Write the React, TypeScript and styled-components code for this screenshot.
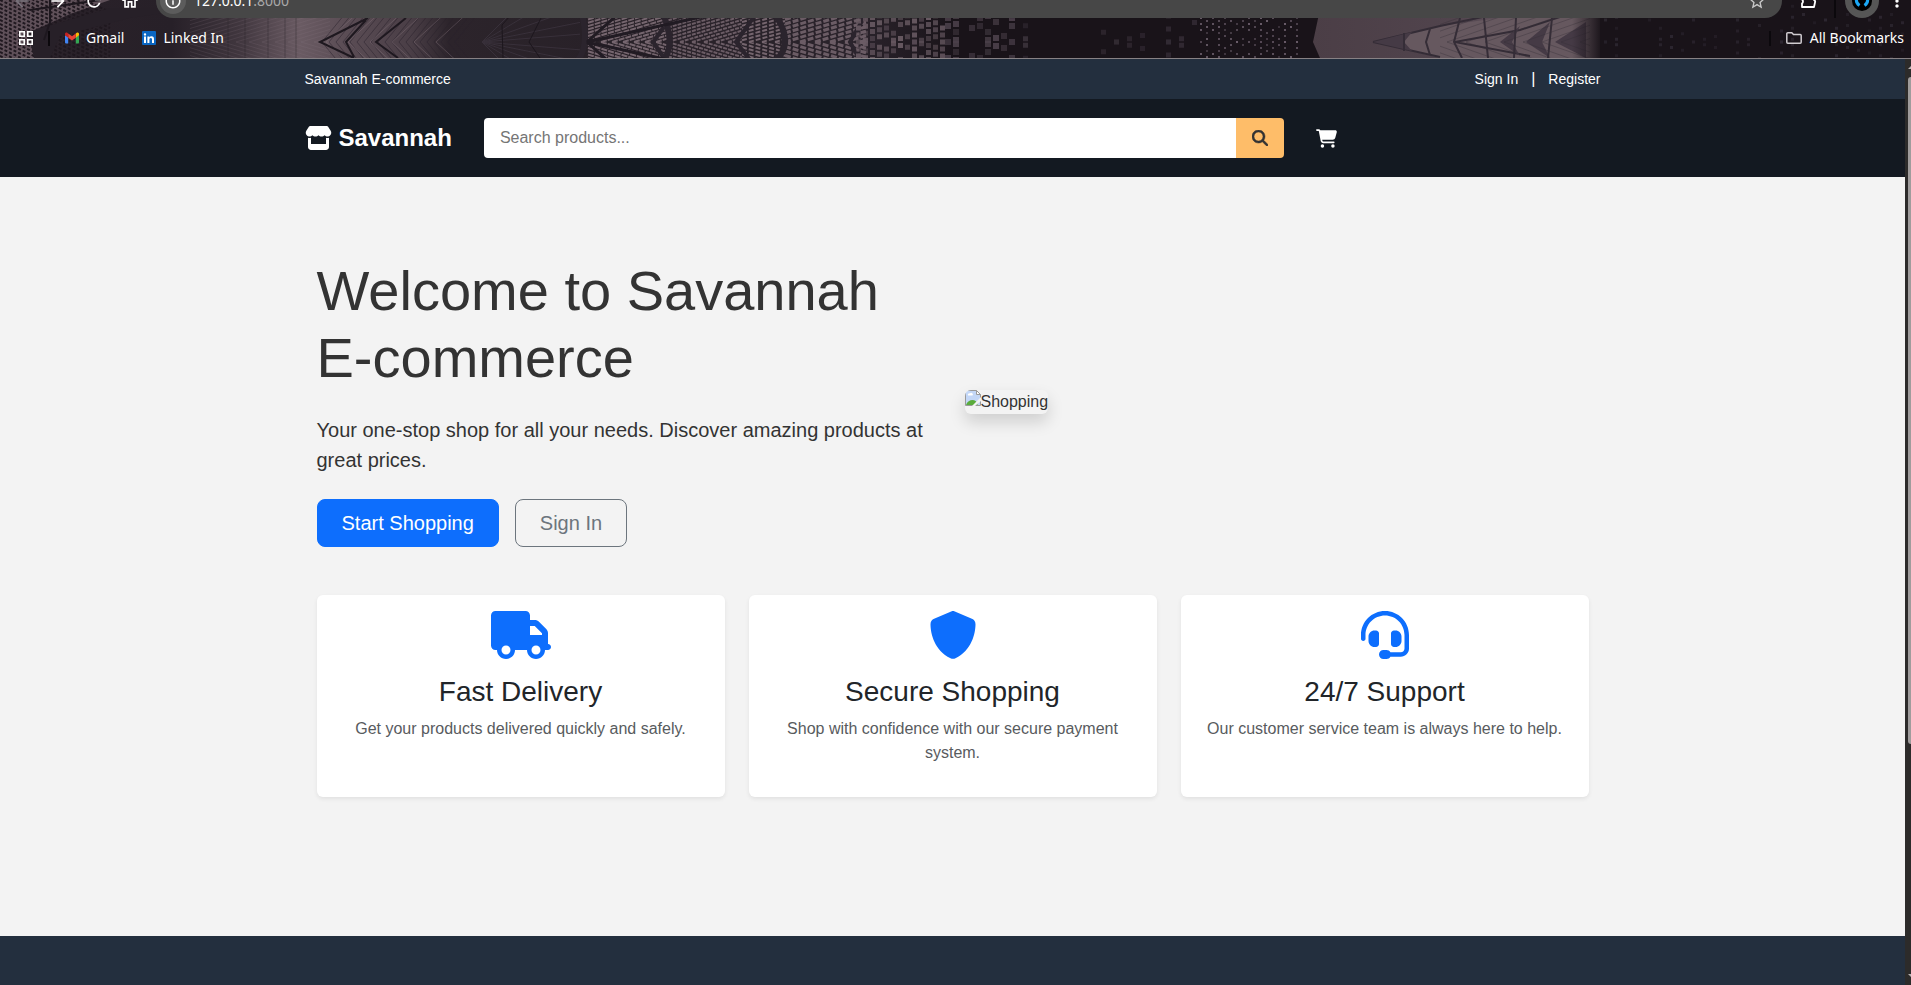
import React from "react";
import styled, { createGlobalStyle, css } from "styled-components";
import {
  FaStore,
  FaMagnifyingGlass,
  FaCartShopping,
  FaTruck,
  FaShield,
  FaHeadset,
} from "react-icons/fa6";
import {
  MdArrowBack,
  MdArrowForward,
  MdRefresh,
  MdOutlineHome,
  MdInfoOutline,
  MdStarBorder,
  MdMoreVert,
} from "react-icons/md";

const GlobalStyle = createGlobalStyle`
  *, *::before, *::after { box-sizing: border-box; }
  body {
    margin: 0;
    background: #232f3e;
    color: #333;
    font: 16px/24px "Liberation Sans", Arial, sans-serif;
  }
  h1, h2, p { margin: 0; font-weight: 400; }
  a { color: inherit; text-decoration: none; }
  svg { display: block; flex: none; }
`;

const Window = styled.div`
  display: flex;
  flex-direction: column;
  min-height: 100vh;
`;

/* ---------- browser chrome ---------- */

const Chrome = styled.header`
  position: relative;
  isolation: isolate;
  overflow: hidden;
  border-bottom: 1px solid #878184;
  background: #1a141b;
  color: #fff;
  font: 14px/20px "Noto Sans", "Open Sans", sans-serif;
`;

const Wallpaper = styled.svg`
  position: absolute;
  top: 0;
  left: 0;
  z-index: -1;
  width: 100%;
  height: 100%;
`;

const Toolbar = styled.div`
  display: flex;
  align-items: flex-end;
  height: 18px;
  padding: 0 0 0 4px;
  overflow: hidden;
`;

const ToolButton = styled.button<{ $dim?: boolean }>`
  display: flex;
  flex: none;
  align-items: center;
  justify-content: center;
  width: 36px;
  height: 34px;
  padding: 0;
  border: 0;
  background: none;
  color: ${(p) => (p.$dim ? "#77717a" : "#fff")};
  font-size: 20px;
`;

const MenuButton = styled(ToolButton)`
  width: 28px;
`;

const AddressBar = styled.div`
  display: flex;
  flex: 1;
  align-items: center;
  gap: 8px;
  height: 34px;
  margin: 0 8px;
  padding: 0 12px 0 4px;
  border-radius: 17px;
  background: #474747;
`;

const SiteInfo = styled.button`
  display: flex;
  align-items: center;
  justify-content: center;
  width: 26px;
  height: 26px;
  padding: 0;
  border: 0;
  border-radius: 13px;
  background: #5c5c5c;
  color: #fff;
  font-size: 18px;
`;

const Address = styled.div`
  flex: 1;
  color: #a9a9a9;
  span { color: #fff; }
`;

const StarButton = styled(ToolButton)`
  width: 26px;
  color: #c9c9c9;
`;

const ToolDivider = styled.span`
  width: 2px;
  height: 26px;
  margin: 0 9px 0 8px;
  background: #0b080c;
`;

const Avatar = styled.button`
  display: flex;
  flex: none;
  align-items: center;
  justify-content: center;
  width: 34px;
  height: 34px;
  margin-right: 4px;
  padding: 0;
  border: 0;
  border-radius: 17px;
  background: #565656;
`;

const Bookmarks = styled.nav`
  display: flex;
  align-items: center;
  height: 40px;
  padding: 0 7px 0 19px;
`;

const BookmarkDivider = styled.span`
  width: 2px;
  height: 15px;
  margin: 0 15px;
  background: #0b080c;
`;

const Bookmark = styled.a`
  display: flex;
  align-items: center;
  gap: 7px;
  margin-right: 18px;
  &:last-child { gap: 8px; margin-right: 0; }
`;

const Spacer = styled.span`
  flex: 1;
`;

/* ---------- page ---------- */

const Viewport = styled.div`
  display: flex;
  flex: 1;
`;

const Page = styled.div`
  display: flex;
  flex: 1;
  flex-direction: column;
  min-width: 0;
`;

const Container = styled.div`
  width: 100%;
  max-width: 1320px;
  margin: 0 auto;
  padding: 0 12px;
`;

const TopBar = styled.div`
  background: #232f3e;
  color: #fff;
  font-size: 14px;
`;

const TopBarRow = styled(Container)`
  display: flex;
  align-items: center;
  justify-content: space-between;
  height: 40px;
`;

const AccountLinks = styled.nav`
  display: flex;
  align-items: center;
  gap: 13px;
  span { font-size: 16px; }
`;

const SiteHeader = styled.div`
  background: #131921;
  color: #fff;
`;

const SiteHeaderRow = styled(Container)`
  display: flex;
  align-items: center;
  gap: 32px;
  height: 78px;
`;

const Brand = styled.a`
  display: flex;
  align-items: center;
  gap: 7px;
  font-size: 24px;
  font-weight: 700;
  line-height: 36px;
  svg { width: 27px; height: 24px; }
`;

const SearchForm = styled.form`
  display: flex;
  flex: 1;
  max-width: 800px;
  height: 40px;
`;

const SearchInput = styled.input`
  flex: 1;
  min-width: 0;
  padding: 0 16px;
  border: 0;
  border-radius: 4px 0 0 4px;
  background: #fff;
  color: #333;
  font: inherit;
  &::placeholder { color: #757575; }
`;

const SearchButton = styled.button`
  display: flex;
  align-items: center;
  justify-content: center;
  width: 48px;
  border: 0;
  border-radius: 0 4px 4px 0;
  background: #febd69;
  color: #333;
  font-size: 16px;
  svg { stroke: currentColor; stroke-width: 16; }
`;

const Main = styled.main`
  padding: 80px 0 139px;
  background: #f3f3f3;
`;

const Content = styled(Container)`
  display: flex;
  flex-direction: column;
  gap: 48px;
  padding: 0 24px;
`;

const Hero = styled.section`
  display: grid;
  grid-template-columns: 1fr 1fr;
  align-items: center;
  gap: 24px;
`;

const HeroText = styled.div`
  display: flex;
  flex-direction: column;
  gap: 24px;
`;

const HeroTitle = styled.h1`
  font-size: 56px;
  line-height: 67px;
`;

const Lead = styled.p`
  font-size: 20px;
  line-height: 30px;
`;

const Actions = styled.div`
  display: flex;
  gap: 16px;
`;

const ActionButton = styled.button<{ $primary?: boolean }>`
  padding: 8px 24px;
  border: 1px solid #6c757d;
  border-radius: 8px;
  background: transparent;
  color: #6c757d;
  font: 20px/30px "Liberation Sans", Arial, sans-serif;
  ${(p) =>
    p.$primary &&
    css`
      border-color: #0d6efd;
      background: #0d6efd;
      color: #fff;
    `}
`;

const MissingImage = styled.div`
  display: flex;
  justify-self: start;
  height: 24px;
  overflow: hidden;
  border-radius: 6px;
  box-shadow: 0 8px 16px rgba(0, 0, 0, 0.15);
`;

const Features = styled.section`
  display: grid;
  grid-template-columns: repeat(3, 1fr);
  gap: 24px;
`;

const FeatureCard = styled.article`
  display: flex;
  flex-direction: column;
  align-items: center;
  padding: 16px 16px 32px;
  border-radius: 6px;
  background: #fff;
  box-shadow: 0 2px 4px rgba(0, 0, 0, 0.075);
  text-align: center;
  > svg { width: 60px; height: 48px; color: #0d6efd; }
`;

const FeatureTitle = styled.h2`
  margin: 16px 0 8px;
  color: #212529;
  font-size: 28px;
  line-height: 34px;
`;

const FeatureText = styled.p`
  color: #585b5e;
`;

const Footer = styled.footer`
  flex: 1;
  background: #232f3e;
`;

const Scrollbar = styled.div`
  display: flex;
  flex: none;
  flex-direction: column;
  width: 6px;
  padding: 7px 0 8px 3px;
  background: #2c2b2a;
`;

const ScrollTrack = styled.div`
  flex: 1;
  padding: 8px 0;
`;

const ScrollThumb = styled.div`
  height: 75%;
  border-radius: 4px 0 0 4px;
  background: #9f9c9c;
`;

/* ---------- wallpaper drawing ---------- */

const AXIS = 42;

/* Repeatable pseudo-random value in 0..1 for a pair of indices. */
const noise = (a: number, b: number) => {
  const v = Math.sin(a * 127.1 + b * 311.7) * 43758.5453;
  return v - Math.floor(v);
};

const mirrored = (draw: (s: number) => string) => draw(1) + draw(-1);

const raysFrom = (x0: number, x1: number, slopes: number[]) =>
  slopes
    .map((k) =>
      mirrored((s) => `M${x0} ${AXIS}L${x1} ${AXIS + s * k * (x1 - x0)}`)
    )
    .join("");

const chevrons = (from: number, to: number, step: number, lean: number) => {
  let d = "";
  for (let x = from; x < to; x += step)
    d += `M${x + lean} ${AXIS - 44}L${x} ${AXIS}L${x + lean} ${AXIS + 44}`;
  return d;
};

/* Parallel slanted lines that meet their mirror image on the axis. */
const fan = (from: number, to: number, gap: number, slope: number) => {
  let d = "";
  for (let x = from - 240; x < to; x += gap) {
    const start = Math.max(from, x);
    d += mirrored(
      (s) =>
        `M${start} ${AXIS + s * slope * (start - x)}L${to} ${
          AXIS + s * slope * (to - x)
        }`
    );
  }
  return d;
};

const Blocks = ({
  from,
  to,
  step,
  size,
  color,
  density,
  spread = 0.25,
}: {
  from: number;
  to: number;
  step: number;
  size: number;
  color: string;
  density: number;
  spread?: number;
}) => {
  const out: React.ReactElement[] = [];
  for (let i = 0; from + i * step < to; i++) {
    const rise = (i * step * spread) % step;
    for (let j = 0; j * step < 46; j++) {
      if (noise(i, j) > density) continue;
      const x = from + i * step;
      [1, -1].forEach((s) =>
        out.push(
          <rect
            key={`${i}-${j}-${s}`}
            x={x}
            y={AXIS + s * (j * step + rise) - size / 2}
            width={size}
            height={size}
            fill={color}
            opacity={0.4 + 0.6 * noise(j, i)}
          />
        )
      );
    }
  }
  return <>{out}</>;
};

const ChromeWallpaper = () => (
  <Wallpaper viewBox="0 0 1911 58" preserveAspectRatio="none" aria-hidden="true">
    <defs>
      <linearGradient id="base" gradientUnits="userSpaceOnUse" x1="0" x2="1911" y1="0" y2="0">
        <stop offset="0" stopColor="#2b222a" />
        <stop offset="0.09" stopColor="#272028" />
        <stop offset="0.125" stopColor="#40363e" />
        <stop offset="0.157" stopColor="#6a5b63" />
        <stop offset="0.18" stopColor="#5b4d55" />
        <stop offset="0.215" stopColor="#4a3e46" />
        <stop offset="0.235" stopColor="#2c242b" />
        <stop offset="0.31" stopColor="#282128" />
        <stop offset="0.45" stopColor="#2a232b" />
        <stop offset="0.5" stopColor="#191319" />
        <stop offset="1" stopColor="#191319" />
      </linearGradient>
      <linearGradient id="wingBase" x1="0" x2="1" y1="0" y2="0">
        <stop offset="0" stopColor="#4b3e46" />
        <stop offset="0.5" stopColor="#51444d" />
        <stop offset="0.75" stopColor="#675963" />
        <stop offset="1" stopColor="#5a4d56" />
      </linearGradient>
      <linearGradient id="wingFade" x1="0" x2="1" y1="0" y2="0">
        <stop offset="0" stopColor="#191319" stopOpacity="0" />
        <stop offset="1" stopColor="#191319" />
      </linearGradient>
      <clipPath id="wing">
        <path d="M1322 0L1313 42L1320 58H1600V0Z" />
      </clipPath>
    </defs>
    <rect width="1911" height="58" fill="url(#base)" />

    {/* screen mesh in the corner */}
    <path d="M0 0H110L70 14L30 32L44 58H0Z" fill="#5f5059" />
    <path
      d={Array.from({ length: 26 }, (_, i) => `M0 ${i * 4 - 40}L110 ${i * 4 + 12}`).join("")}
      stroke="#1f181f"
      strokeWidth="2"
      strokeDasharray="3 2"
      fill="none"
    />
    <path d="M28 32L110 8H200L130 18L60 36L50 58H34Z" fill="#272028" />
    <path d="M50 0V22L44 40M30 10L100 0" stroke="#1d171e" strokeWidth="2" fill="none" />

    {/* glassy chevrons */}
    <path d={fan(190, 330, 13, 0.3)} stroke="#8a7b84" strokeOpacity="0.18" fill="none" />
    <path d="M228 0V58M245 0V58M268 0V58M285 0V58M296 0V58" stroke="#2a222a" strokeOpacity="0.4" fill="none" />
    <path d={chevrons(322, 460, 7, 36)} stroke="#2a222b" strokeOpacity="0.5" fill="none" />
    <path d={chevrons(326, 440, 22, 48)} stroke="#8b7c85" strokeOpacity="0.35" fill="none" />
    <path d="M368 18L320 42L354 58M366 20L346 42L354 57M406 18L376 42L398 58" stroke="#1e181f" strokeWidth="2" fill="none" />
    <path d={raysFrom(482, 580, [0.08, 0.2, 0.36, 0.6, 1])} stroke="#38303a" fill="none" />
    <path d="M510 16L502 25L503 58M542 16L529 42L540 58" stroke="#1c161d" fill="none" />

    {/* dashed fans */}
    <path d={fan(588, 668, 11, 0.3)} stroke="#75656e" strokeWidth="2" strokeDasharray="6 1" fill="none" />
    <path d={fan(668, 742, 12, 0.3)} stroke="#6b5c65" strokeWidth="2" strokeDasharray="4 1" fill="none" />
    <path d={fan(742, 785, 13, 0.28)} stroke="#75656e" strokeWidth="2" strokeDasharray="5 2" fill="none" />
    <path d={fan(785, 866, 15, 0.3)} stroke="#6b5c65" strokeWidth="3" strokeDasharray="6 2" fill="none" />
    <path d="M578 0Q592 42 578 60M662 12Q676 42 664 60M772 10Q796 42 776 60" stroke="#2b242d" strokeWidth="6" fill="none" />
    <path d="M756 14L736 42L750 60M866 14L850 42L860 60M664 27L653 42L664 58" stroke="#2b242d" strokeWidth="4" fill="none" />
    <path d={raysFrom(587, 720, [0.22, 0.9])} stroke="#211b23" strokeWidth="3" fill="none" />

    {/* loose tiles */}
    <Blocks from={856} to={945} step={7} size={5} color="#6b5c65" density={0.85} />
    <Blocks from={945} to={1010} step={8} size={6} color="#4b404a" density={0.7} />
    <Blocks from={1010} to={1200} step={13} size={5} color="#3b323c" density={0.5} />
    <Blocks from={1200} to={1300} step={6} size={2} color="#6a5d6a" density={0.8} spread={0.5} />

    {/* wing */}
    <g clipPath="url(#wing)">
      <rect x="1310" width="290" height="58" fill="url(#wingBase)" />
      <path d="M1373 42L1440 26L1600 4V58H1440Z" fill="#66585f" />
      <path
        d="M1373 42L1440 26L1600 -8M1373 42L1440 57M1455 42L1520 30L1600 4M1455 42L1530 56"
        stroke="#342c36"
        strokeWidth="2"
        fill="none"
      />
      <path d="M1373 42L1412 32L1404 42L1412 51ZM1500 42L1520 26L1512 42L1520 56ZM1526 42L1550 22L1542 42L1550 58ZM1555 42L1586 22V58Z" fill="#453a45" />
      <path d="M1404 33V51M1430 29L1426 42L1430 55M1460 18L1454 42L1462 58M1484 18L1488 58M1516 18L1514 58M1552 18L1548 58" stroke="#352d37" strokeWidth="2" fill="none" />
      <path d={fan(1440, 1590, 19, 0.35)} stroke="#352d37" strokeOpacity="0.35" fill="none" />
      <rect x="1572" width="30" height="58" fill="url(#wingFade)" />
    </g>

    <Blocks from={1604} to={1911} step={11} size={3} color="#2d2731" density={0.6} />
  </Wallpaper>
);

/* ---------- small drawings ---------- */

const AppsIcon = () => (
  <svg width="14" height="14" viewBox="0 0 14 14" fill="none" stroke="#fff" strokeWidth="1.6" aria-hidden="true">
    <path d="M.8.8h4.400v4.400H.8zM8.800.8h4.400v4.400H8.800zM.8 8.800h4.400v4.400H.8zM8.800 8.800h4.400v4.400H8.800z" />
  </svg>
);

const ExtensionIcon = () => (
  <svg width="20" height="20" viewBox="0 0 20 20" fill="none" stroke="#fff" strokeWidth="1.8" strokeLinejoin="round" aria-hidden="true">
    <path d="M4 5h4a2 2 0 0 1 4 0h4v4a2 2 0 0 1 1 2.500L16 16H4v-3.500a2.500 2.500 0 0 0 0-4z" />
  </svg>
);

const GmailIcon = () => (
  <svg width="14" height="12" viewBox="0 0 14 11" aria-hidden="true">
    <path d="M0 2.500V10a1 1 0 0 0 1 1h2.200V4.600z" fill="#4285f4" />
    <path d="M14 2.500V10a1 1 0 0 1-1 1h-2.200V4.600z" fill="#34a853" />
    <path d="M10.800 1v4.200L14 2.800V1.500C14 .2 12.600-.4 11.500.4z" fill="#fbbc04" />
    <path d="M3.200 5.200V1L7 3.800 10.800 1v4.200L7 8z" fill="#ea4335" />
    <path d="M0 1.500v1.300l3.200 2.400V1L2.500.4C1.400-.4 0 .2 0 1.500z" fill="#c5221f" />
  </svg>
);

const LinkedInIcon = () => (
  <svg width="14" height="14" viewBox="0 0 14 14" aria-hidden="true">
    <rect width="14" height="14" rx="1" fill="#0a66c2" />
    <path d="M2 5.500h2V12H2zM3 2.200a1.200 1.200 0 1 1 0 2.400 1.200 1.200 0 0 1 0-2.400zM5.400 5.500h2v.9c.4-.7 1.100-1.100 2-1.100 2 0 2.600 1.300 2.600 3V12h-2V8.700c0-.9-.1-1.700-1.200-1.700S7.400 7.900 7.400 8.700V12h-2z" fill="#fff" />
  </svg>
);

const FolderIcon = () => (
  <svg width="16" height="12" viewBox="0 0 16 12" fill="none" stroke="#d0ccd0" strokeWidth="1.5" aria-hidden="true">
    <path d="M.8 1.800a1 1 0 0 1 1-1h4l1.700 1.700h6.700a1 1 0 0 1 1 1v6.700a1 1 0 0 1-1 1H1.800a1 1 0 0 1-1-1z" />
  </svg>
);

const AvatarGlyph = () => (
  <svg width="20" height="20" viewBox="0 0 20 20" aria-hidden="true">
    <circle cx="10" cy="10" r="10" fill="#000" />
    <path d="M7.500 14.500C4.500 12.500 3.500 10 5 6M12.500 14.500C15.500 12.500 16.500 10 15 6" fill="none" stroke="#1ba8f5" strokeWidth="3" />
  </svg>
);

const BrokenImageIcon = () => (
  <svg width="16" height="16" viewBox="0 0 16 16" aria-hidden="true">
    <path d="M.5.500h11l4 4v11H.5z" fill="#c3d7f7" stroke="#9a9a9a" />
    <path d="M11.500.500v4h4z" fill="#fff" stroke="#9a9a9a" />
    <path d="M3 5.500a1.500 1.500 0 0 1 2-2 1.500 1.500 0 0 1 2.500 2z" fill="#fff" />
    <path d="M1 15c1-3.500 4-5 6.500-5s4 1.500 5 3v2z" fill="#5aac3c" />
    <path d="M16 7L7 16h3l6-5z" fill="#f3f3f3" />
  </svg>
);

const ScrollArrow = ({ down }: { down?: boolean }) => (
  <svg width="3" height="3" viewBox="0 0 3 3" aria-hidden="true">
    <path d={down ? "M0 0h3v3z" : "M0 3h3V0z"} fill="#b5b2b2" />
  </svg>
);

const features = [
  { Icon: FaTruck, title: "Fast Delivery", text: "Get your products delivered quickly and safely." },
  { Icon: FaShield, title: "Secure Shopping", text: "Shop with confidence with our secure payment system." },
  { Icon: FaHeadset, title: "24/7 Support", text: "Our customer service team is always here to help." },
];

export default function App() {
  return (
    <Window>
      <GlobalStyle />
      <Chrome>
        <ChromeWallpaper />
        <Toolbar>
          <ToolButton $dim aria-label="Back"><MdArrowBack /></ToolButton>
          <ToolButton aria-label="Forward"><MdArrowForward /></ToolButton>
          <ToolButton aria-label="Reload"><MdRefresh /></ToolButton>
          <ToolButton aria-label="Home"><MdOutlineHome /></ToolButton>
          <AddressBar>
            <SiteInfo aria-label="Site information"><MdInfoOutline /></SiteInfo>
            <Address><span>127.0.0.1</span>:8000</Address>
            <StarButton aria-label="Bookmark this page"><MdStarBorder /></StarButton>
          </AddressBar>
          <ToolButton aria-label="Extensions"><ExtensionIcon /></ToolButton>
          <ToolDivider />
          <Avatar aria-label="Profile"><AvatarGlyph /></Avatar>
          <MenuButton aria-label="Menu"><MdMoreVert /></MenuButton>
        </Toolbar>
        <Bookmarks>
          <AppsIcon />
          <BookmarkDivider />
          <Bookmark href="#gmail"><GmailIcon />Gmail</Bookmark>
          <Bookmark href="#linkedin"><LinkedInIcon />Linked In</Bookmark>
          <Spacer />
          <BookmarkDivider />
          <Bookmark href="#bookmarks"><FolderIcon />All Bookmarks</Bookmark>
        </Bookmarks>
      </Chrome>

      <Viewport>
        <Page>
          <TopBar>
            <TopBarRow>
              <a href="#home">Savannah E-commerce</a>
              <AccountLinks>
                <a href="#signin">Sign In</a>
                <span>|</span>
                <a href="#register">Register</a>
              </AccountLinks>
            </TopBarRow>
          </TopBar>
          <SiteHeader>
            <SiteHeaderRow>
              <Brand href="#home">
                <FaStore />
                Savannah
              </Brand>
              <SearchForm onSubmit={(e) => e.preventDefault()}>
                <SearchInput type="text" placeholder="Search products..." aria-label="Search products" />
                <SearchButton type="submit" aria-label="Search"><FaMagnifyingGlass /></SearchButton>
              </SearchForm>
              <a href="#cart" aria-label="Cart"><FaCartShopping size={21} /></a>
            </SiteHeaderRow>
          </SiteHeader>

          <Main>
            <Content>
              <Hero>
                <HeroText>
                  <HeroTitle>Welcome to Savannah E-commerce</HeroTitle>
                  <Lead>
                    Your one-stop shop for all your needs. Discover amazing products at great prices.
                  </Lead>
                  <Actions>
                    <ActionButton $primary>Start Shopping</ActionButton>
                    <ActionButton>Sign In</ActionButton>
                  </Actions>
                </HeroText>
                <MissingImage>
                  <BrokenImageIcon />
                  Shopping
                </MissingImage>
              </Hero>
              <Features>
                {features.map(({ Icon, title, text }) => (
                  <FeatureCard key={title}>
                    <Icon />
                    <FeatureTitle>{title}</FeatureTitle>
                    <FeatureText>{text}</FeatureText>
                  </FeatureCard>
                ))}
              </Features>
            </Content>
          </Main>
          <Footer />
        </Page>
        <Scrollbar>
          <ScrollArrow />
          <ScrollTrack><ScrollThumb /></ScrollTrack>
          <ScrollArrow down />
        </Scrollbar>
      </Viewport>
    </Window>
  );
}
